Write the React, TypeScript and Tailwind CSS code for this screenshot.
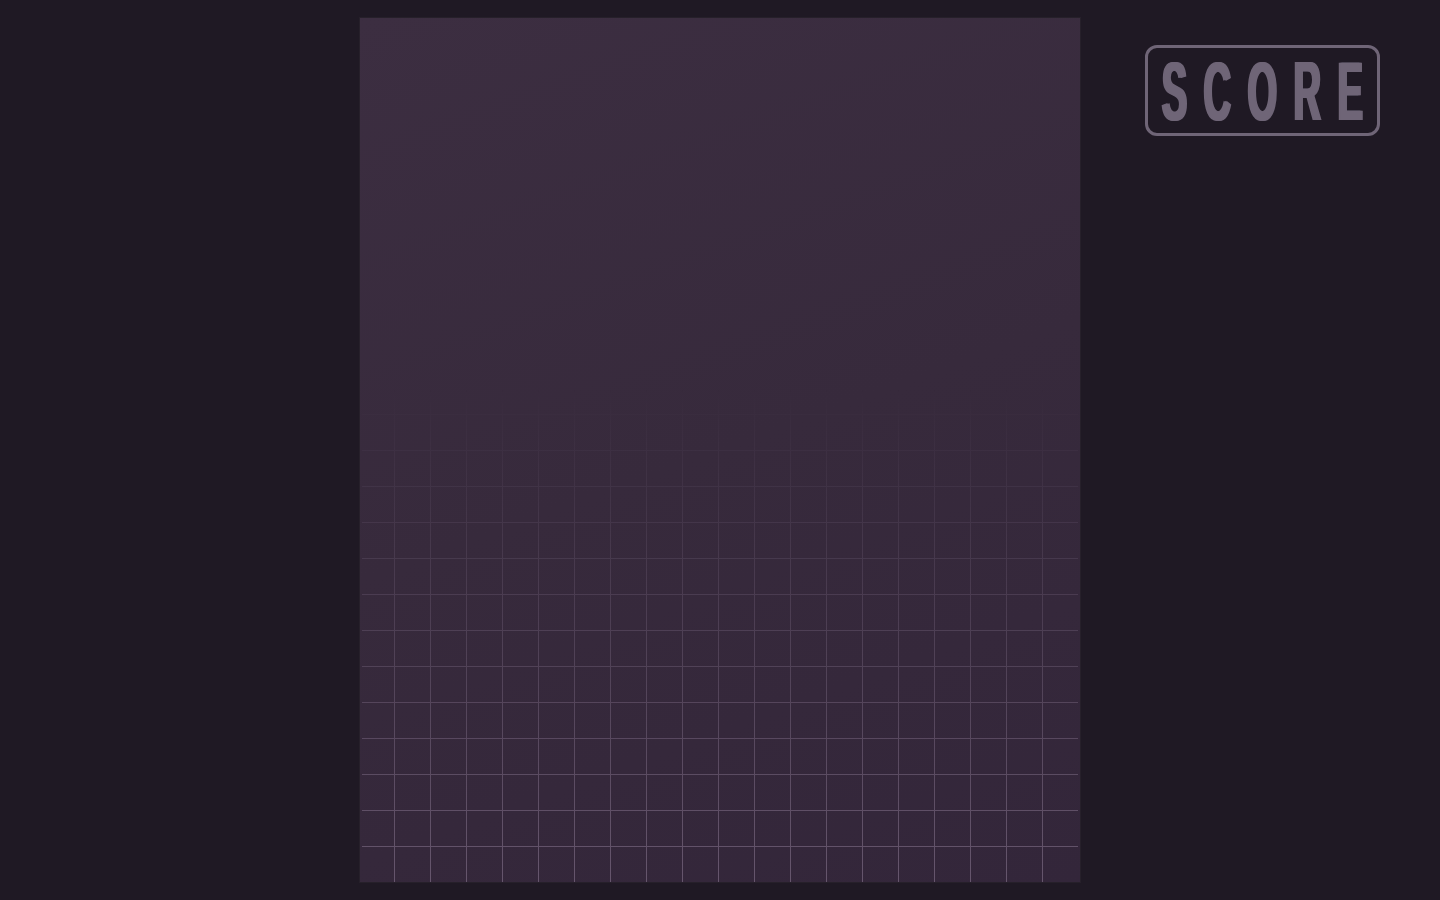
export default function App() {
  return (
    <div className="min-h-screen w-full bg-[#1f1924] grid grid-cols-[360px_720px_360px] py-[18px]">
      {/* left gutter */}
      <div />

      {/* Board */}
      <div className="relative h-[864px] bg-[linear-gradient(160deg,#3c2e41_0%,#372a3c_50%,#33263a_100%)] shadow-[0_0_0_1px_rgba(255,255,255,0.03)]">
        <div className="absolute inset-x-[2px] inset-y-0 bg-[linear-gradient(to_right,#66566d_1px,transparent_1px),linear-gradient(to_bottom,#66566d_1px,transparent_1px)] bg-[size:36px_36px] bg-[position:32px_0px] [mask-image:linear-gradient(to_bottom,transparent_43%,rgba(0,0,0,0.35)_62%,black_100%)]" />
      </div>

      {/* Score */}
      <div className="pl-[65px] pt-[27px]">
        <div className="w-[235px] h-[91px] rounded-[12px] border-[3px] border-[#6f6577] flex items-center justify-center">
          <span className="inline-block shrink-0 text-[84px] leading-none font-bold text-[#6f6577] tracking-[37px] pl-[37px] scale-x-[0.45] [text-shadow:3px_0_0_#6f6577,-3px_0_0_#6f6577] font-['Liberation_Sans',Arial,sans-serif]">
            SCORE
          </span>
        </div>
      </div>
    </div>
  );
}
